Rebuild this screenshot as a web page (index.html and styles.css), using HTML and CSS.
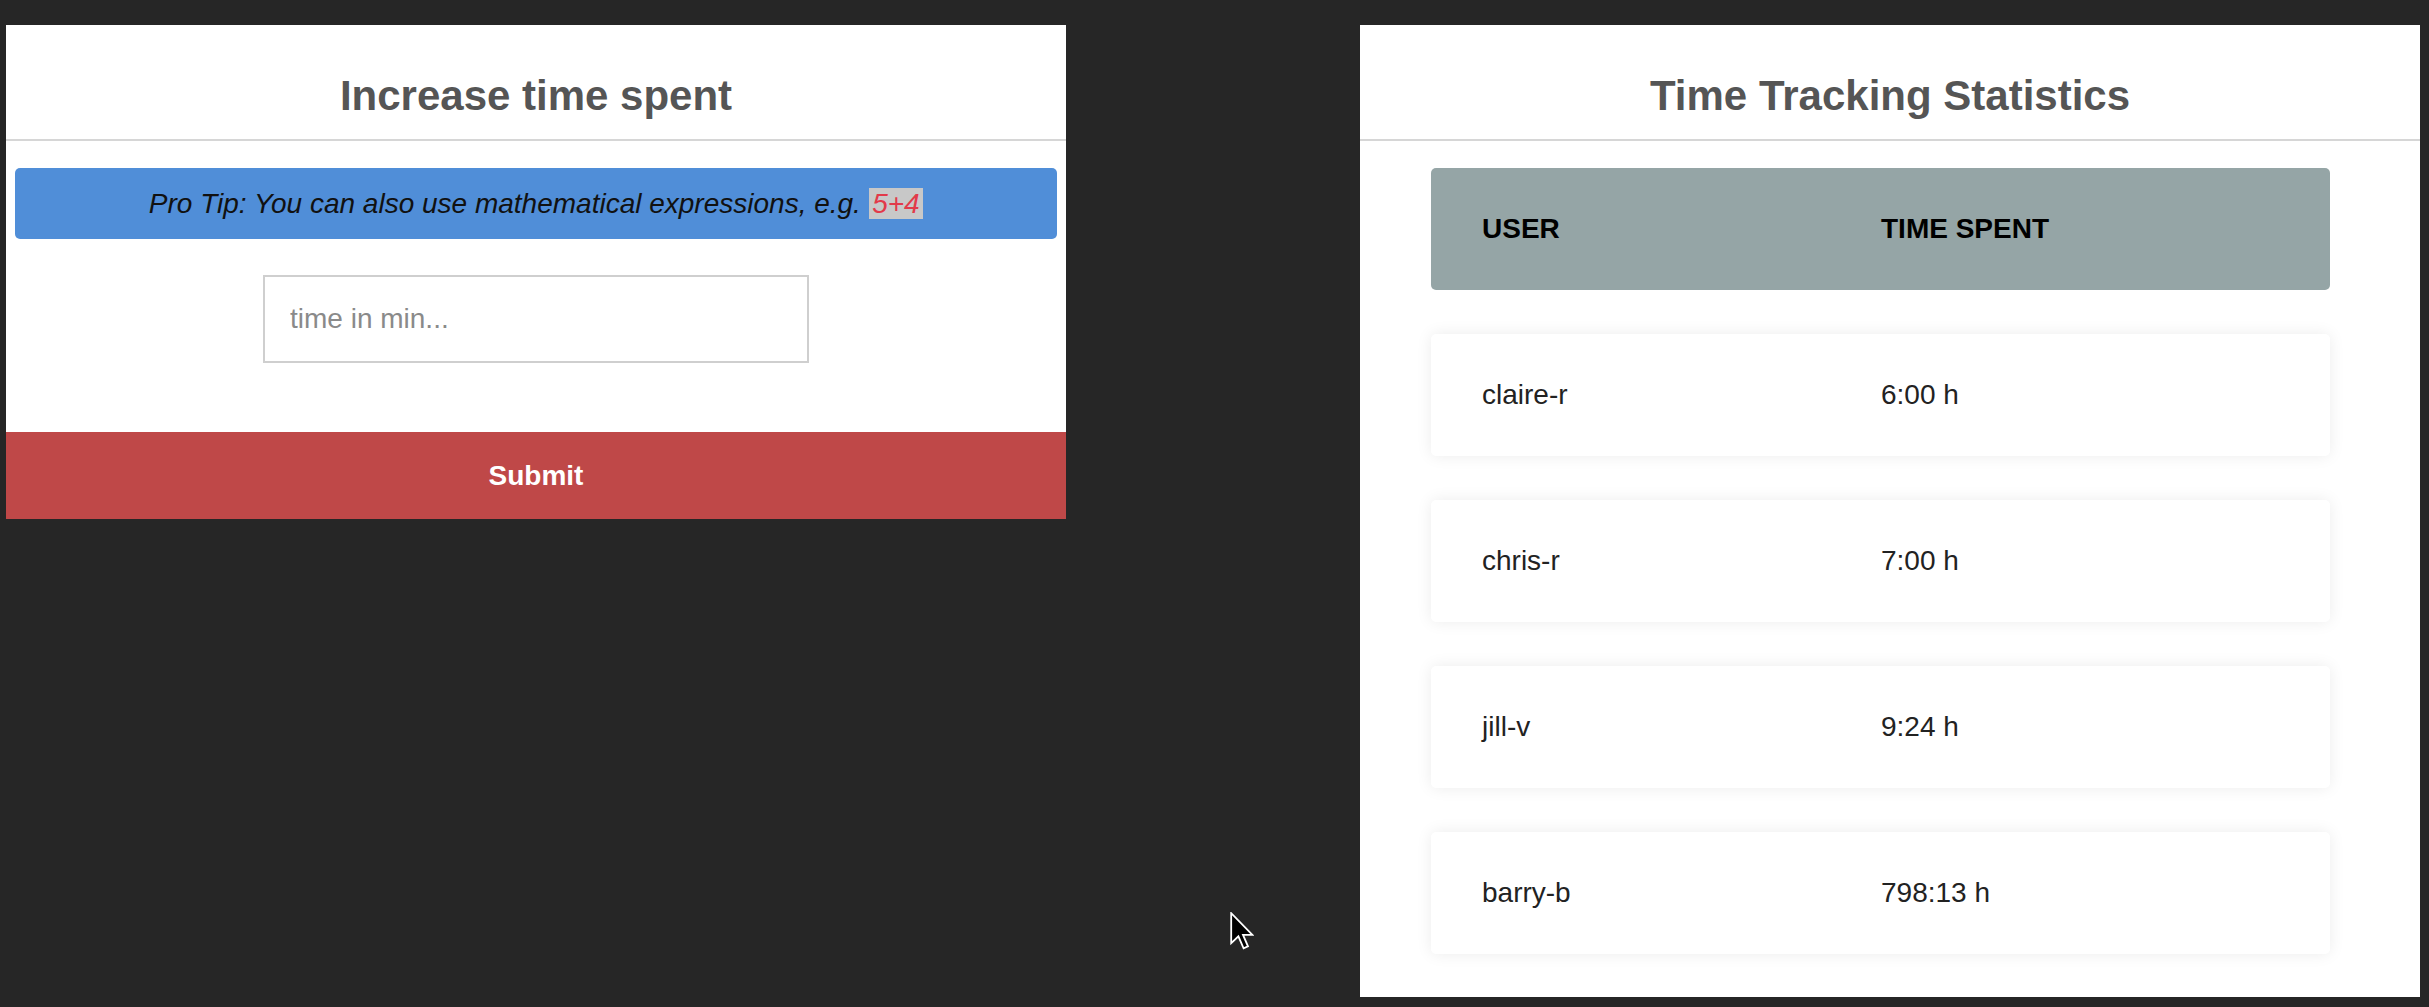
FILE: index.html
```html
<!DOCTYPE html>
<html lang="en">
<head>
<meta charset="utf-8">
<title>Time Tracking</title>
<link rel="stylesheet" href="styles.css">
</head>
<body>
<div class="page">
  <section class="card card-form">
    <h2 class="card-title">Increase time spent</h2>
    <div class="tip">Pro Tip: You can also use mathematical expressions, e.g. <code class="tip-code">5+4</code></div>
    <input class="time-input" type="text" placeholder="time in min...">
    <button class="submit" type="button">Submit</button>
  </section>

  <section class="card card-stats">
    <h2 class="card-title">Time Tracking Statistics</h2>
    <ul class="table">
      <li class="row row-head"><div class="col col-user">User</div><div class="col">Time Spent</div></li>
      <li class="row"><div class="col col-user">claire-r</div><div class="col">6:00 h</div></li>
      <li class="row"><div class="col col-user">chris-r</div><div class="col">7:00 h</div></li>
      <li class="row"><div class="col col-user">jill-v</div><div class="col">9:24 h</div></li>
      <li class="row"><div class="col col-user">barry-b</div><div class="col">798:13 h</div></li>
    </ul>
  </section>
</div>
<svg class="cursor" width="24" height="38" viewBox="0 0 12 19" aria-hidden="true">
  <path d="M0.6 0.6 L0.6 15.6 L4.2 12.2 L6.8 18.2 L9 17.2 L6.5 11.4 L11.2 11.4 Z" fill="#000" stroke="#fff" stroke-width="0.9" stroke-linejoin="miter"/>
</svg>
</body>
</html>
```
FILE: styles.css
```css
html, body {
  margin: 0;
  padding: 0;
}
body {
  background: #262626;
  font-family: "Liberation Sans", Arial, sans-serif;
  height: 1007px;
  overflow: hidden;
  position: relative;
}
.page {
  display: flex;
  justify-content: space-between;
  align-items: flex-start;
  padding: 25px 9px 0 6px;
}
.card {
  background: #fff;
  width: 1060px;
  display: flex;
  flex-direction: column;
}
.card-stats {
  height: 972px;
  box-sizing: border-box;
}
.card-title {
  margin: 0;
  padding: 47px 0 19px;
  font-size: 42px;
  line-height: 48px;
  font-weight: bold;
  color: #555;
  text-align: center;
  border-bottom: 2px solid #d6d6d6;
}
.tip {
  margin: 27px 9px 0;
  padding: 19.5px 10px;
  background: #508ed8;
  border-radius: 5px;
  font-style: italic;
  font-size: 28px;
  line-height: 32px;
  color: #111;
  text-align: center;
}
.tip-code {
  font-family: "Liberation Sans", Arial, sans-serif;
  font-style: italic;
  font-size: 28px;
  color: #e23a4a;
  background: #c8c8c8;
  padding: 0 3.5px;
}
.time-input {
  display: block;
  box-sizing: border-box;
  width: 546px;
  height: 88px;
  margin: 36px auto 0;
  padding: 0 25px;
  border: 2px solid #cfcfcf;
  font-family: "Liberation Sans", Arial, sans-serif;
  font-size: 28px;
  color: #333;
  outline: none;
}
.time-input::placeholder {
  color: #8a8a8a;
}
.submit {
  display: block;
  width: 100%;
  height: 87px;
  margin-top: 69px;
  border: none;
  background: #bf4848;
  color: #fff;
  font-family: "Liberation Sans", Arial, sans-serif;
  font-size: 28px;
  font-weight: bold;
  padding: 0;
}
.table {
  list-style: none;
  margin: 27px 0 0 71px;
  padding: 0;
  width: 899px;
  display: flex;
  flex-direction: column;
  gap: 44px;
}
.row {
  display: grid;
  grid-template-columns: 450px 1fr;
  align-items: center;
  height: 122px;
  box-sizing: border-box;
  border-radius: 5px;
  background: #fff;
  box-shadow: 0 0 16px 0 rgba(0, 0, 0, 0.08);
  font-size: 28px;
  color: #222;
}
.row-head {
  background: #95a5a6;
  box-shadow: none;
  font-weight: bold;
  text-transform: uppercase;
  color: #000;
}
.col-user {
  padding-left: 51px;
}
.cursor {
  position: absolute;
  left: 1230px;
  top: 912px;
}
```
